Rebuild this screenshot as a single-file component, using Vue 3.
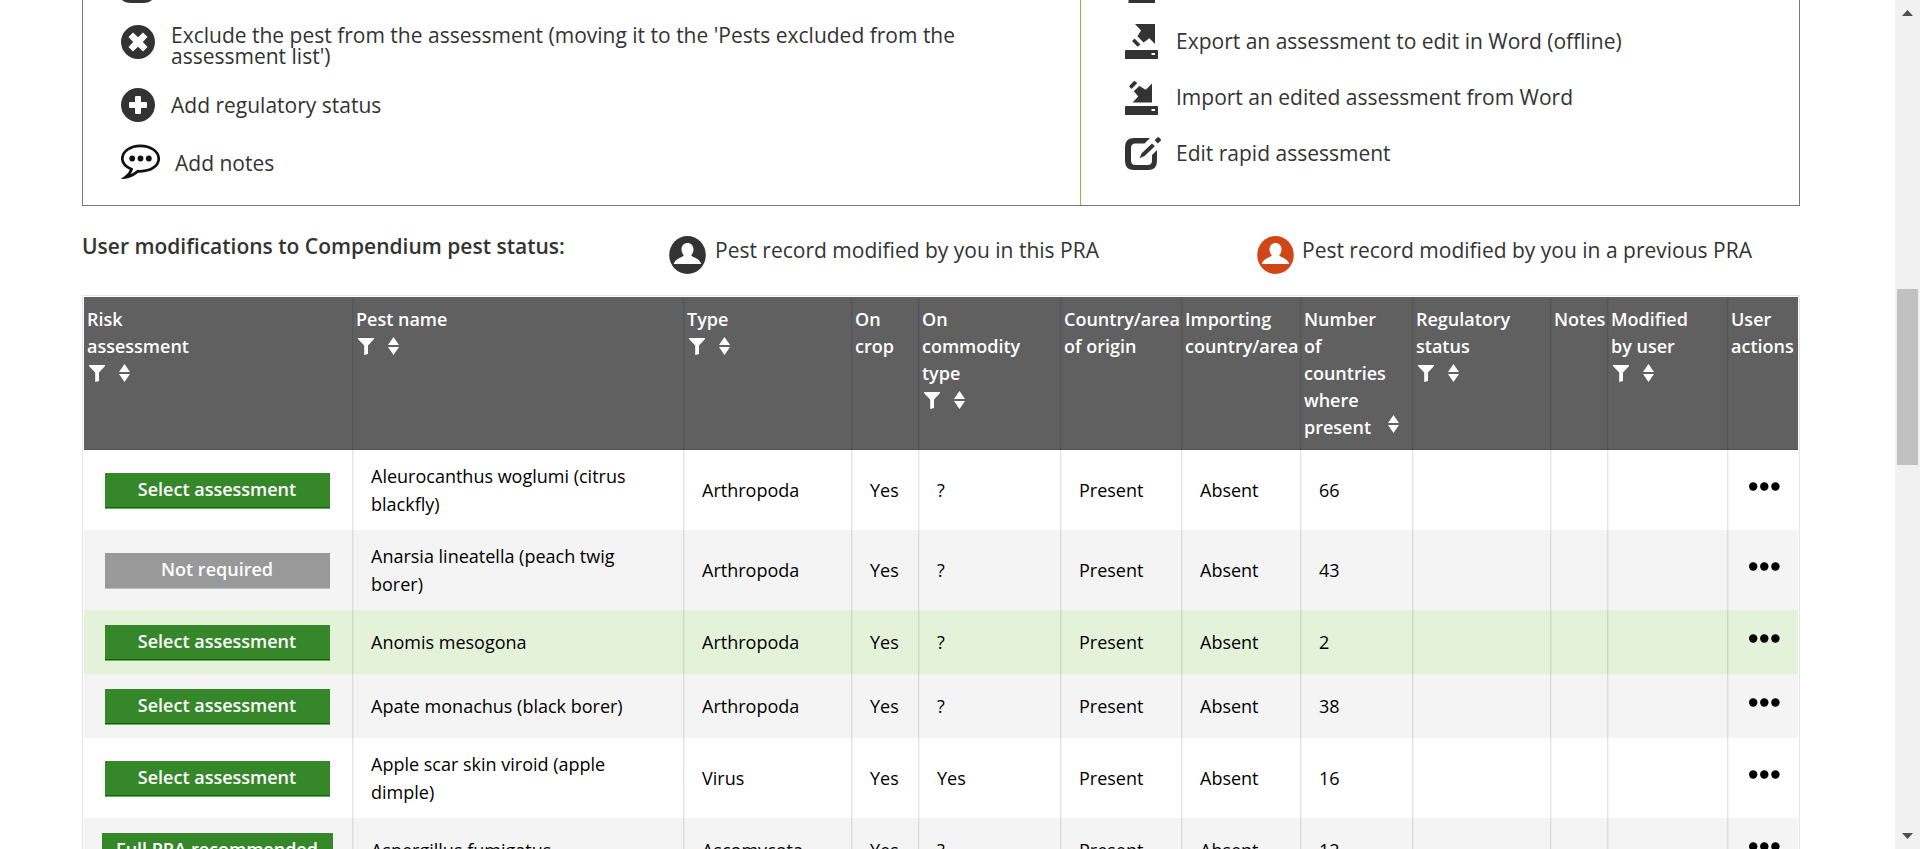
<script setup>
const headers = [
  { lines: ['Risk', 'assessment'], filter: true, sort: true },
  { lines: ['Pest name'], filter: true, sort: true },
  { lines: ['Type'], filter: true, sort: true },
  { lines: ['On', 'crop'] },
  { lines: ['On', 'commodity', 'type'], filter: true, sort: true },
  { lines: ['Country/area', 'of origin'] },
  { lines: ['Importing', 'country/area'] },
  { lines: ['Number', 'of', 'countries', 'where', 'present'], inlineSort: true },
  { lines: ['Regulatory', 'status'], filter: true, sort: true },
  { lines: ['Notes'] },
  { lines: ['Modified', 'by user'], filter: true, sort: true },
  { lines: ['User', 'actions'] },
]
const rows = [
  { btn: 'Select assessment', cells: ['Aleurocanthus woglumi (citrus blackfly)', 'Arthropoda', 'Yes', '?', 'Present', 'Absent', '66', '', '', ''], kind: 'tall' },
  { btn: 'Not required', grey: true, cells: ['Anarsia lineatella (peach twig borer)', 'Arthropoda', 'Yes', '?', 'Present', 'Absent', '43', '', '', ''], kind: 'tall alt' },
  { btn: 'Select assessment', cells: ['Anomis mesogona', 'Arthropoda', 'Yes', '?', 'Present', 'Absent', '2', '', '', ''], kind: 'hover' },
  { btn: 'Select assessment', cells: ['Apate monachus (black borer)', 'Arthropoda', 'Yes', '?', 'Present', 'Absent', '38', '', '', ''], kind: 'alt' },
  { btn: 'Select assessment', cells: ['Apple scar skin viroid (apple dimple)', 'Virus', 'Yes', 'Yes', 'Present', 'Absent', '16', '', '', ''], kind: 'tall' },
  { btn: 'Full PRA recommended', wide: true, cells: ['Aspergillus fumigatus', 'Ascomycota', 'Yes', '?', 'Present', 'Absent', '12', '', '', ''], kind: 'alt' },
]
const statuses = [
  { cls: 'mine', color: '#333333', text: 'Pest record modified by you in this PRA' },
  { cls: 'previous', color: '#d04616', text: 'Pest record modified by you in a previous PRA' },
]
</script>

<template>
  <div class="page">
    <main class="content">
      <section class="legend">
        <div class="legend-col left">
          <div class="item cut">
            <svg width="34" height="10" viewBox="0 0 34 10"><path d="M1 0H31Q28 3 22 3H10Q4 3 1 0Z" fill="#333" /></svg>
          </div>
          <div class="item exclude">
            <svg width="34" height="34" viewBox="0 0 34 34">
              <circle cx="17" cy="17" r="17" fill="#333" />
              <path d="M12 7.5L17 12.2L22 7.5L26.5 12L21.8 17L26.5 22L22 26.5L17 21.8L12 26.5L7.5 22L12.2 17L7.5 12Z" fill="#fff" />
            </svg>
            <span>Exclude the pest from the assessment (moving it to the 'Pests excluded from the<br>assessment list')</span>
          </div>
          <div class="item add">
            <svg width="34" height="34" viewBox="0 0 34 34">
              <circle cx="17" cy="17" r="17" fill="#333" />
              <path d="M14 9.2Q14 8 15.2 8H18.8Q20 8 20 9.2V14H24.8Q26 14 26 15.2V18.8Q26 20 24.8 20H20V24.8Q20 26 18.8 26H15.2Q14 26 14 24.8V20H9.2Q8 20 8 18.8V15.2Q8 14 9.2 14H14Z" fill="#fff" />
            </svg>
            <span>Add regulatory status</span>
          </div>
          <div class="item notes">
            <svg width="39" height="35" viewBox="0 0 39 35">
              <path d="M10.5 25.3C5 22.8 1.3 19.2 1.3 14.7C1.3 7.4 9.4 1.8 19.4 1.8S37.7 7.4 37.7 14.7S29.6 27.3 19.4 27.3L17 27.1C13.5 30 9.5 32.7 4.3 33.3C8 30.5 9.5 28.5 10.5 25.3Z" fill="#fff" stroke="#111" stroke-width="2.7" />
              <circle cx="11.2" cy="14.5" r="2.9" fill="#111" /><circle cx="19.5" cy="14.5" r="2.9" fill="#111" /><circle cx="27.8" cy="14.5" r="2.9" fill="#111" />
            </svg>
            <span>Add notes</span>
          </div>
        </div>
        <div class="legend-col right">
          <div class="item cut">
            <svg width="34" height="10" viewBox="0 0 34 10"><path d="M3.5 0H30V3H3.5Z" fill="#333" /></svg>
          </div>
          <div class="item action">
            <svg width="37" height="36" viewBox="0 0 37 36">
              <path d="M10 0H30V20L24.3 14.2L18.6 18.5L12.4 12.3L16 6.5Z" fill="#333" />
              <path d="M9.6 14.6L15.4 20.4L12.6 22.8L7 17Z" fill="#333" />
              <path fill-rule="evenodd" d="M1 26H32Q33 26 33 27V35H0V27Q0 26 1 26ZM26.5 29V31H30V29Z" fill="#333" />
            </svg>
            <span>Export an assessment to edit in Word (offline)</span>
          </div>
          <div class="item action">
            <svg width="37" height="36" viewBox="0 0 37 36">
              <path d="M27 3.5V22.5H7.5L13.3 16.5L8.8 11.3L14.3 6L20.8 9.7Z" fill="#333" />
              <path d="M4 6.2L9.3 .7L12.3 3L6.5 9Z" fill="#333" />
              <path fill-rule="evenodd" d="M1 26H32Q33 26 33 27V35H0V27Q0 26 1 26ZM26.5 29V31H30V29Z" fill="#333" />
            </svg>
            <span>Import an edited assessment from Word</span>
          </div>
          <div class="item action">
            <svg width="37" height="36" viewBox="0 0 37 36">
              <path d="M25 2H9Q0 2 0 11V25Q0 34 9 34H23Q32 34 32 25V14L27 19V24.5Q27 29 22.5 29H10.5Q6 29 6 24.5V12Q6 7.5 10.5 7.5H19.5Z" fill="#333" />
              <path d="M27 7.5L29.8 10.3L19.6 20.1L14.5 22.3L16.7 17.2ZM29.6 4.2L32.4 1.4Q33.3 .8 34.1 1.5L35.8 3.2Q36.3 4 35.7 4.8L32.8 7.6Z" fill="#333" />
            </svg>
            <span>Edit rapid assessment</span>
          </div>
        </div>
      </section>

      <section class="status-row">
        <h2>User modifications to Compendium pest status:</h2>
        <div v-for="s in statuses" :key="s.cls" class="status" :class="s.cls">
          <svg width="37" height="38" viewBox="0 0 37 38" preserveAspectRatio="none">
            <ellipse cx="18.5" cy="19" rx="18.3" ry="19" :fill="s.color" />
            <path d="M18.5 7C22 7 24.5 9.5 24.5 13.5C24.5 16.5 23.3 18.2 22.2 19.3C22.2 21 30.5 22 32.3 28H4.7C6.5 22 14.8 21 14.8 19.3C13.7 18.2 12.5 16.5 12.5 13.5C12.5 9.5 15 7 18.5 7Z" fill="#fff" />
          </svg>
          <span>{{ s.text }}</span>
        </div>
      </section>

      <div class="table-wrap">
        <div class="row head">
          <div v-for="(h, i) in headers" :key="i" class="cell">
            <div v-for="(l, j) in h.lines" :key="l" class="line">
              {{ l }}<svg v-if="h.inlineSort && j === h.lines.length - 1" class="sort inline" width="11" height="18" viewBox="0 0 11 18"><path d="M5.5 0L11 8H0ZM0 10H11L5.5 18Z" fill="#fff" /></svg>
            </div>
            <div v-if="h.filter" class="tools">
              <svg width="16" height="17" viewBox="0 0 16 17"><path d="M0 0H16V1L10 7.5V16L6.2 17V7.5L0 1Z" fill="#fff" /></svg>
              <svg class="sort" width="11" height="18" viewBox="0 0 11 18"><path d="M5.5 0L11 8H0ZM0 10H11L5.5 18Z" fill="#fff" /></svg>
            </div>
          </div>
        </div>
        <div v-for="r in rows" :key="r.cells[0]" class="row" :class="r.kind">
          <div class="cell action-cell"><button :class="{ grey: r.grey, wide: r.wide }">{{ r.btn }}</button></div>
          <div v-for="(c, i) in r.cells" :key="i" class="cell">{{ c }}</div>
          <div class="cell dots">
            <svg width="31" height="9" viewBox="0 0 31 9"><circle cx="4.2" cy="4.5" r="4.2" /><circle cx="15.3" cy="4.5" r="4.2" /><circle cx="26.4" cy="4.5" r="4.2" /></svg>
          </div>
        </div>
      </div>
    </main>

    <aside class="scrollbar">
      <svg width="25" height="25" viewBox="0 0 25 25"><path d="M7 16L12.5 10L18 16Z" fill="#505050" /></svg>
      <div class="thumb"></div>
      <svg class="down" width="25" height="25" viewBox="0 0 25 25"><path d="M7 9H18L12.5 15Z" fill="#505050" /></svg>
    </aside>
  </div>
</template>

<style>
body { margin: 0; overflow: hidden; background: #fff; }
</style>

<style scoped>
* { box-sizing: border-box; }
svg { display: block; flex: none; }
.page { display: flex; justify-content: space-between; width: 1920px; height: 849px; overflow: hidden; font-family: "Open Sans", sans-serif; color: #333; }
.content { margin-left: 82px; width: 1718px; }
.legend { display: flex; height: 206px; border: 1px solid #777; border-top: 0; font-size: 21px; font-weight: 400; line-height: 21px; }
.legend-col { height: 205px; }
.left { width: 998px; border-right: 1px solid #7fc241; padding-left: 38px; }
.right { padding-left: 44px; }
.item { display: flex; align-items: center; white-space: nowrap; }
.cut { height: 24px; align-items: flex-start; }
.exclude { height: 42px; gap: 16px; margin-bottom: 22px; }
.exclude svg { margin-top: -7px; }
.exclude span { margin-top: 2px; }
.add { height: 34px; gap: 16px; }
.notes { height: 38px; gap: 15px; margin-top: 22px; }
.notes svg { margin-top: -3px; }
.action { height: 36px; margin-bottom: 20px; gap: 14px; }
.action span { padding-bottom: 2px; }
.status-row { display: flex; height: 89px; font-size: 21px; line-height: 30px; }
h2 { margin: 25px 0 0; width: 587px; font-size: 21px; font-weight: 600; line-height: 30px; white-space: nowrap; }
.status { display: flex; gap: 9px; padding-top: 30px; white-space: nowrap; }
.status span { margin-top: -1px; }
.mine { width: 588px; }
.previous { gap: 8px; }
.table-wrap { height: 560px; border: 1px solid #e4e4e4; border-bottom: 0; padding: 1px; }
.row { display: grid; grid-template-columns: 269px 331px 168px 67px 142px 121px 119px 112px 138px 57px 120px 70px; height: 64px; color: #000; font-size: 18px; line-height: 28px; }
.tall { height: 80px; }
.alt { background: #f4f4f4; }
.hover { background: #e4f2da; }
.cell { display: flex; align-items: center; padding-left: 17px; padding-right: 20px; border-left: 1px solid rgba(0, 0, 0, .035); border-right: 1px solid rgba(0, 0, 0, .1); }
.cell:first-child { border-left: 0; }
.cell:last-child { border-right: 0; }
.head { height: 153px; background: #606060; color: #fff; line-height: 27px; box-shadow: inset 0 -1px #525252; }
.head .cell { display: block; padding: 9px 0 0 2px; font-weight: 600; white-space: nowrap; }
.head .cell:first-child { padding-left: 3px; }
.head .line { display: flex; height: 27px; }
.inline { margin: 1px 0 0 17px; }
.tools { display: flex; gap: 14px; padding: 4px 0 0 2px; }
.tools svg:first-child { margin-top: 1px; }
.row .action-cell { justify-content: center; padding: 2px 2px 0 0; }
button { width: 225px; height: 36px; padding: 0 0 5px; border: 0; background: #36872a; box-shadow: inset 0 -1px #6fae67, inset 0 -2px #14600f; color: #fff; font: 600 18px/28px "Open Sans", sans-serif; white-space: nowrap; }
button.grey { background: #999; box-shadow: inset 0 -1px #bebebe; }
button.wide { width: 231px; }
.row .dots { padding: 0 0 8px 20px; }
.scrollbar { display: flex; flex-direction: column; width: 25px; height: 849px; background: #f1f1f1; }
.thumb { width: 21px; height: 176px; margin: 264px 2px 0; background: #c1c1c1; }
.down { margin-top: auto; }
</style>
